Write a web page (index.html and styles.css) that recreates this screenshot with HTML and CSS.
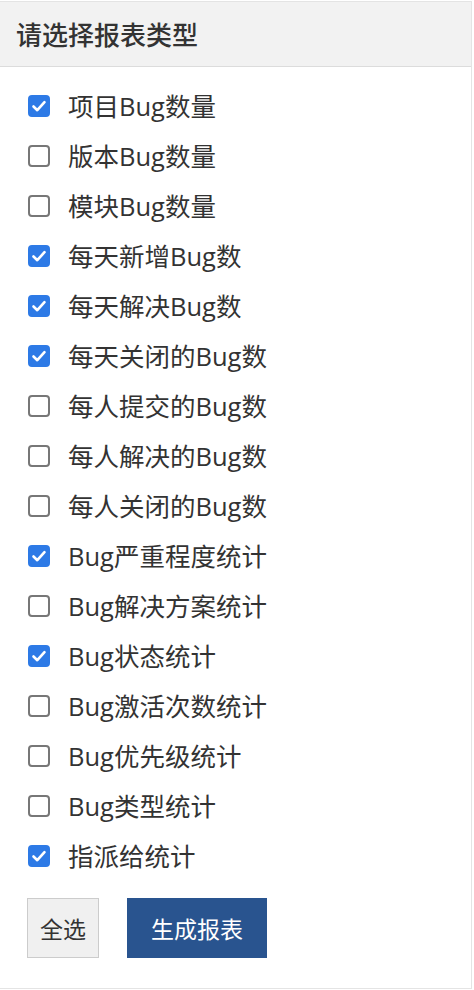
FILE: index.html
```html
<!DOCTYPE html>
<html lang="zh">
<head>
<meta charset="utf-8">
<link rel="stylesheet" href="styles.css">
</head>
<body>
<div class="panel">
  <div class="panel-head">请选择报表类型</div>
  <div class="panel-body">
    <ul class="list">
      <li class="row"><span class="cb on"><svg viewBox="0 0 22 22"><path d="M5.5 11.5 L9.3 15.2 L16.5 7.2" fill="none" stroke="#fff" stroke-width="2.6" stroke-linecap="round" stroke-linejoin="round"/></svg></span><span class="lbl">项目Bug数量</span></li>
      <li class="row"><span class="cb"></span><span class="lbl">版本Bug数量</span></li>
      <li class="row"><span class="cb"></span><span class="lbl">模块Bug数量</span></li>
      <li class="row"><span class="cb on"><svg viewBox="0 0 22 22"><path d="M5.5 11.5 L9.3 15.2 L16.5 7.2" fill="none" stroke="#fff" stroke-width="2.6" stroke-linecap="round" stroke-linejoin="round"/></svg></span><span class="lbl">每天新增Bug数</span></li>
      <li class="row"><span class="cb on"><svg viewBox="0 0 22 22"><path d="M5.5 11.5 L9.3 15.2 L16.5 7.2" fill="none" stroke="#fff" stroke-width="2.6" stroke-linecap="round" stroke-linejoin="round"/></svg></span><span class="lbl">每天解决Bug数</span></li>
      <li class="row"><span class="cb on"><svg viewBox="0 0 22 22"><path d="M5.5 11.5 L9.3 15.2 L16.5 7.2" fill="none" stroke="#fff" stroke-width="2.6" stroke-linecap="round" stroke-linejoin="round"/></svg></span><span class="lbl">每天关闭的Bug数</span></li>
      <li class="row"><span class="cb"></span><span class="lbl">每人提交的Bug数</span></li>
      <li class="row"><span class="cb"></span><span class="lbl">每人解决的Bug数</span></li>
      <li class="row"><span class="cb"></span><span class="lbl">每人关闭的Bug数</span></li>
      <li class="row"><span class="cb on"><svg viewBox="0 0 22 22"><path d="M5.5 11.5 L9.3 15.2 L16.5 7.2" fill="none" stroke="#fff" stroke-width="2.6" stroke-linecap="round" stroke-linejoin="round"/></svg></span><span class="lbl">Bug严重程度统计</span></li>
      <li class="row"><span class="cb"></span><span class="lbl">Bug解决方案统计</span></li>
      <li class="row"><span class="cb on"><svg viewBox="0 0 22 22"><path d="M5.5 11.5 L9.3 15.2 L16.5 7.2" fill="none" stroke="#fff" stroke-width="2.6" stroke-linecap="round" stroke-linejoin="round"/></svg></span><span class="lbl">Bug状态统计</span></li>
      <li class="row"><span class="cb"></span><span class="lbl">Bug激活次数统计</span></li>
      <li class="row"><span class="cb"></span><span class="lbl">Bug优先级统计</span></li>
      <li class="row"><span class="cb"></span><span class="lbl">Bug类型统计</span></li>
      <li class="row"><span class="cb on"><svg viewBox="0 0 22 22"><path d="M5.5 11.5 L9.3 15.2 L16.5 7.2" fill="none" stroke="#fff" stroke-width="2.6" stroke-linecap="round" stroke-linejoin="round"/></svg></span><span class="lbl">指派给统计</span></li>
    </ul>
    <div class="actions">
      <button class="btn btn-default">全选</button>
      <button class="btn btn-primary">生成报表</button>
    </div>
  </div>
</div>
</body>
</html>
```
FILE: styles.css
```css
html, body {
  margin: 0;
  padding: 0;
  background: #ffffff;
}
body {
  font-family: "Open Sans", "Noto Sans CJK SC", sans-serif;
  color: #333333;
  padding-top: 1px;
}
.panel {
  width: 471px;
  border: 1px solid #e4e4e4;
  border-left: none;
  background: #ffffff;
}
.panel-head {
  height: 64px;
  display: flex;
  align-items: center;
  padding-left: 16px;
  background: #f2f2f2;
  border-bottom: 1px solid #dcdcdc;
  font-size: 26px;
  font-weight: 500;
  color: #333333;
}
.panel-body {
  padding: 14px 0 30px 0;
}
.list {
  list-style: none;
  margin: 0;
  padding: 0;
}
.row {
  height: 50px;
  display: flex;
  align-items: center;
  padding-left: 28px;
}
.cb {
  width: 22px;
  height: 22px;
  box-sizing: border-box;
  border: 2px solid #777777;
  border-radius: 4px;
  background: #ffffff;
  flex: none;
  display: flex;
}
.cb.on {
  background: #2d7ae6;
  border-color: #2d7ae6;
}
.cb svg {
  width: 22px;
  height: 22px;
  margin: -2px;
}
.lbl {
  margin-left: 18px;
  font-size: 25.5px;
  line-height: 30px;
  color: #333333;
}
.actions {
  display: flex;
  gap: 28px;
  padding-left: 27px;
  margin-top: 17px;
}
.btn {
  height: 60px;
  font-family: "Open Sans", "Noto Sans CJK SC", sans-serif;
  font-size: 23px;
  border-radius: 0;
  padding: 0;
  cursor: pointer;
}
.btn-default {
  width: 72px;
  background: #f0f0f0;
  border: 1px solid #cccccc;
  color: #333333;
}
.btn-primary {
  width: 140px;
  background: #29548f;
  border: 1px solid #29548f;
  color: #ffffff;
}
```
